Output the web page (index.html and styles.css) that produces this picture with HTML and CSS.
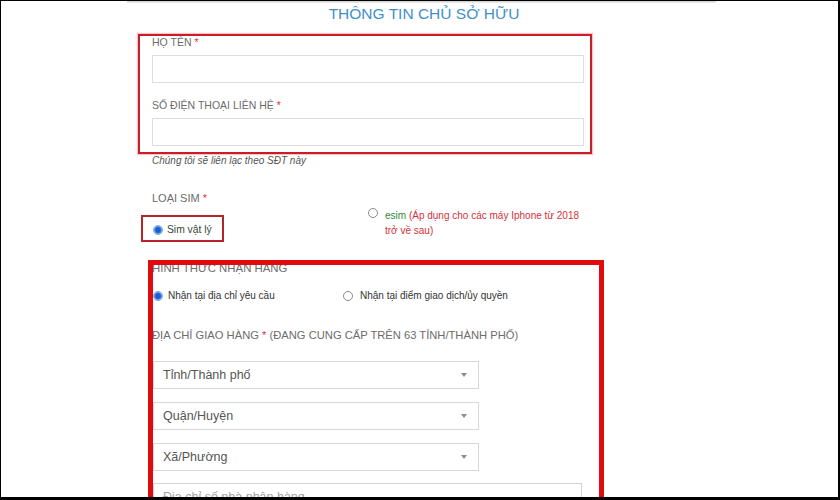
FILE: index.html
```html
<!DOCTYPE html>
<html lang="vi">
<head>
<meta charset="utf-8">
<title>Thông tin chủ sở hữu</title>
<link rel="stylesheet" href="styles.css">
</head>
<body>
<div class="frame">
  <div class="card-edge"></div>
  <h1 class="title">THÔNG TIN CHỦ SỞ HỮU</h1>
  <div class="form">
    <div class="label l-name">HỌ TÊN <span class="req">*</span></div>
    <div class="input i-name"></div>
    <div class="label l-phone">SỐ ĐIỆN THOẠI LIÊN HỆ <span class="req">*</span></div>
    <div class="input i-phone"></div>
    <p class="help">Chúng tôi sẽ liên lạc theo SĐT này</p>

    <div class="label l-sim">LOẠI SIM <span class="req">*</span></div>
    <div class="sim-row">
      <div class="opt opt-physical"><span class="radio on"></span><span class="sim-text">Sim vật lý</span></div>
      <div class="opt opt-esim"><span class="radio"></span><span class="esim-text"><span class="green">esim</span> <span class="red">(Áp dụng cho các máy Iphone từ 2018 trở về sau)</span></span></div>
    </div>

    <div class="label l-ship">HÌNH THỨC NHẬN HÀNG</div>
    <div class="recv-row">
      <div class="opt opt-home"><span class="radio on"></span><span class="recv-text">Nhận tại địa chỉ yêu cầu</span></div>
      <div class="opt opt-store"><span class="radio"></span><span class="recv-text">Nhận tại điểm giao dịch/ủy quyền</span></div>
    </div>

    <div class="label l-addr">ĐỊA CHỈ GIAO HÀNG <span class="req">*</span> (ĐANG CUNG CẤP TRÊN 63 TỈNH/THÀNH PHỐ)</div>
    <div class="select s-first"><span>Tỉnh/Thành phố</span><span class="caret"></span></div>
    <div class="select"><span>Quận/Huyện</span><span class="caret"></span></div>
    <div class="select"><span>Xã/Phường</span><span class="caret"></span></div>
    <div class="addr">Địa chỉ số nhà nhận hàng</div>
  </div>

  <div class="mark mark-owner"></div>
  <div class="mark mark-sim"></div>
  <div class="mark mark-ship"></div>
</div>
</body>
</html>
```
FILE: styles.css
```css
* { box-sizing: border-box; }
html, body { margin: 0; padding: 0; background: #fff; }
body { font-family: "Liberation Sans", Arial, sans-serif; }

.frame {
  position: relative;
  width: 840px;
  height: 500px;
  border-style: solid;
  border-color: #000;
  border-width: 1px 2px 3px 1px;
  overflow: hidden;
  background: #fff;
}

.card-edge {
  margin-left: 126px;
  width: 589px;
  height: 2px;
  background: linear-gradient(#c9c9c9, #f3f3f3);
}

.title {
  margin: 1px 0 0 130px;
  width: 586px;
  text-align: center;
  font-size: 15.5px;
  line-height: 20px;
  font-weight: normal;
  color: #3f8fcb;
}

.form { margin-left: 151px; width: 433px; }

.label { font-size: 10.5px; line-height: 14px; color: #6c6c6c; }
.req { color: #e0353f; }

.input { height: 28px; width: 432px; border: 1px solid #dddddd; background: #fff; }
.l-name { margin-top: 11px; }
.i-name { margin-top: 6px; }
.l-phone { margin-top: 15px; }
.i-phone { margin-top: 6px; }

.help {
  margin: 8px 0 0;
  font-size: 10px;
  line-height: 14px;
  font-style: italic;
  color: #555;
}

.l-sim { margin-top: 23px; font-size: 11px; }

.radio {
  flex: none;
  display: block;
  width: 10px;
  height: 10px;
  border-radius: 50%;
  border: 1px solid #8a8a8a;
  background: #fff;
}
.radio.on {
  border-color: #78a6e2;
  background: radial-gradient(circle, #1b5fcf 0 2.4px, #4f8ce4 3.2px, #bcd5f5 4.6px);
}

.sim-row { display: flex; height: 33px; }
.opt { display: flex; }
.opt-physical { width: 218px; padding-top: 16px; align-items: center; }
.opt-physical .radio { margin-left: 1px; }
.sim-text { margin-left: 4px; font-size: 10.3px; line-height: 14px; color: #34483a; }
.opt-esim { padding-top: 3px; align-items: flex-start; }
.opt-esim .radio { margin-top: 0; }
.esim-text { margin-left: 7px; width: 200px; font-size: 10px; line-height: 15px; }
.green { color: #2f8a3c; }
.red { color: #d6303a; }

.l-ship { margin-top: 23px; font-size: 11.4px; }

.recv-row { display: flex; margin-top: 14px; line-height: 14px; }
.opt-home { width: 191px; align-items: center; }
.opt-home .radio { margin-left: 1px; }
.opt-home .recv-text { margin-left: 5px; }
.opt-store { align-items: center; }
.opt-store .recv-text { margin-left: 7px; }
.recv-text { font-size: 10px; color: #333; }

.l-addr { margin-top: 25px; font-size: 11.2px; }

.select {
  display: flex;
  align-items: center;
  justify-content: space-between;
  margin: 13px 0 0 1px;
  width: 326px;
  height: 28px;
  padding: 0 11px 0 9px;
  border: 1px solid #d9d9d9;
  font-size: 12.5px;
  color: #555;
}
.select.s-first { margin-top: 19px; }
.caret {
  width: 0;
  height: 0;
  border-left: 3px solid transparent;
  border-right: 3px solid transparent;
  border-top: 4px solid #8c8c8c;
}

.addr {
  margin: 12px 0 0 1px;
  width: 429px;
  height: 28px;
  padding-left: 9px;
  border: 1px solid #d4d4d4;
  font-size: 12.5px;
  line-height: 26px;
  color: #a3a3a3;
}

.mark { position: absolute; }
.mark-owner {
  left: 137px; top: 33px; width: 454px; height: 120px;
  border: 2px solid #c71f29;
  box-shadow: 0 0 1px 1px rgba(225, 80, 90, 0.35);
}
.mark-sim {
  left: 140px; top: 214px; width: 83px; height: 27px;
  border: 2px solid #b5232c;
}
.mark-ship {
  left: 147px; top: 259px; width: 456px; height: 300px;
  border: 5px solid #e10a0e;
}
```
